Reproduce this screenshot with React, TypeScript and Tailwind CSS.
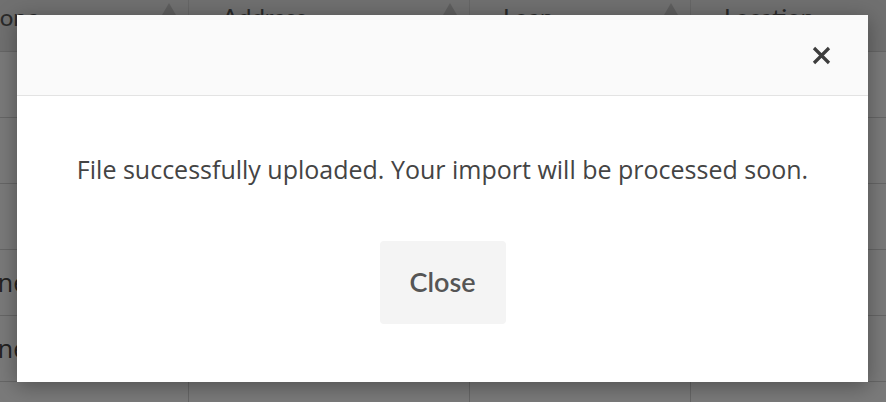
import React from "react";

const columns = [
  { label: "Phone", width: "w-[240px]", head: "pl-[23px] pr-[33px]", cell: "pl-[15px] pr-[33px]" },
  { label: "Address", width: "w-[281px]", head: "px-[33px]", cell: "px-[33px]" },
  { label: "Loan", width: "w-[221px]", head: "px-[33px]", cell: "px-[33px]" },
  { label: "Location", width: "w-[240px]", head: "px-[33px]", cell: "px-[33px]" },
];

const rows = [
  ["", "", "", ""],
  ["", "", "", ""],
  ["", "", "", ""],
  ["None", "", "", ""],
  ["None", "", "", ""],
  ["", "", "", ""],
];

function SortArrow() {
  return (
    <svg width="14" height="12" viewBox="0 0 14 12" className="absolute right-[12px] top-[3px]">
      <path d="M7 0 L14 12 L0 12 Z" fill="#bdbdbd" />
    </svg>
  );
}

export default function App() {
  return (
    <div className="relative h-[402px] w-[886px] overflow-hidden bg-[#f5f5f5] font-['Lato',sans-serif]">
      {/* table behind the dialog */}
      <div className="-ml-[51px] flex flex-col">
        <div className="flex h-[52px] border-b border-[#cccccc] bg-[#e0e0e0]">
          {columns.map((c) => (
            <div
              key={c.label}
              className={`relative ${c.width} ${c.head} shrink-0 border-r border-[#cccccc] pt-[5px] text-[24px] leading-[24px] text-[#555]`}
            >
              {c.label}
              <SortArrow />
            </div>
          ))}
        </div>
        {rows.map((r, i) => (
          <div key={i} className="flex h-[66px] border-b border-[#cccccc]">
            {r.map((cell, j) => (
              <div
                key={j}
                className={`${columns[j].width} ${columns[j].cell} flex shrink-0 items-center border-r border-[#cccccc] font-['Open_Sans',sans-serif] text-[25px] text-[#444]`}
              >
                {cell}
              </div>
            ))}
          </div>
        ))}
      </div>

      {/* overlay */}
      <div className="absolute inset-0 bg-black/50" />

      {/* dialog */}
      <div className="absolute left-[17px] top-[15px] flex w-[851px] flex-col bg-white shadow-[0_4px_20px_rgba(0,0,0,0.35)]">
        <div className="flex h-[81px] items-center justify-end border-b border-[#e3e3e3] bg-[#fafafa] pr-[35px]">
          <button className="flex h-[24px] w-[24px] items-center justify-center">
            <svg width="19" height="19" viewBox="0 0 19 19">
              <path d="M2 2 L17 17 M17 2 L2 17" stroke="#3d3d3d" strokeWidth="3.2" strokeLinecap="butt" />
            </svg>
          </button>
        </div>
        <div className="flex flex-col items-center gap-[55px] pb-[58px] pt-[56px]">
          <p className="font-['Open_Sans',sans-serif] text-[25px] leading-[34px] text-[#444]">
            File successfully uploaded. Your import will be processed soon.
          </p>
          <button className="h-[83px] w-[126px] rounded-[4px] bg-[#f4f4f4] text-[27px] font-semibold text-[#555]">
            Close
          </button>
        </div>
      </div>
    </div>
  );
}
